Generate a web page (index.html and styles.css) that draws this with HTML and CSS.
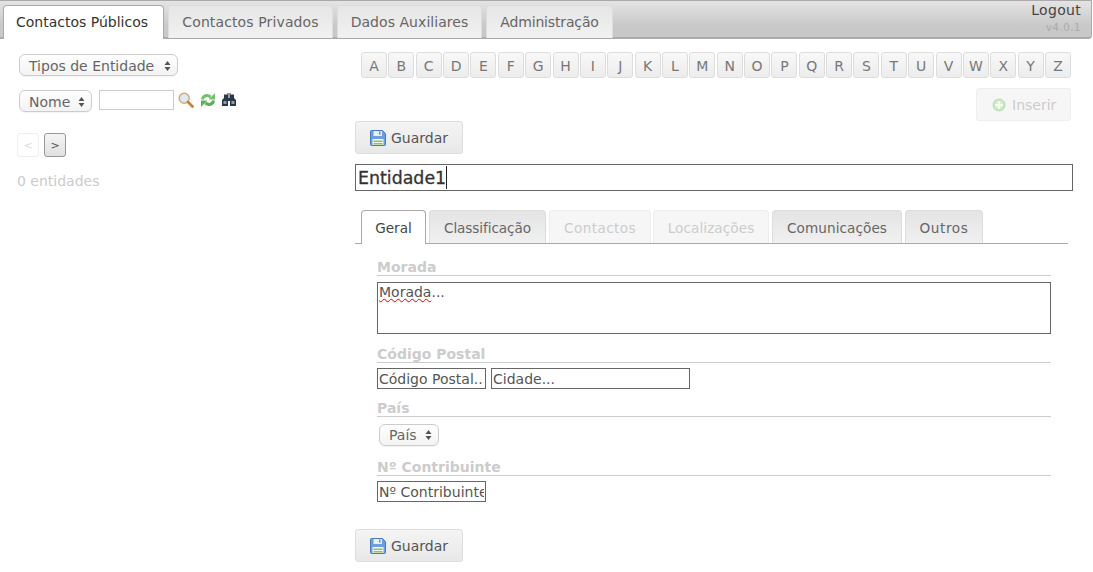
FILE: index.html
```html
<!DOCTYPE html>
<html lang="pt">
<head>
<meta charset="utf-8">
<title>Contactos Públicos</title>
<link rel="stylesheet" href="styles.css">
</head>
<body>
<header class="topbar">
  <nav class="maintabs">
    <a class="maintab active">Contactos Públicos</a>
    <a class="maintab tab-priv">Contactos Privados</a>
    <a class="maintab tab-dados">Dados Auxiliares</a>
    <a class="maintab tab-admin">Administração</a>
  </nav>
  <div class="session">
    <a class="logout">Logout</a>
    <span class="version">v4.0.1</span>
  </div>
</header>
<main class="page">
  <aside class="left">
    <div class="sel sel-tipos"><span>Tipos de Entidade</span><svg class="updown" width="7" height="10" viewBox="0 0 7 10"><path d="M3.500 0L6.500 4H0.500zM3.500 10L0.500 6h6z"/></svg></div>
    <div class="searchrow">
      <div class="sel sel-nome"><span>Nome</span><svg class="updown" width="7" height="10" viewBox="0 0 7 10"><path d="M3.500 0L6.500 4H0.500zM3.500 10L0.500 6h6z"/></svg></div>
      <input class="searchbox" type="text">
      <svg class="ico ico-search" width="16" height="16" viewBox="0 0 16 16"><circle cx="6.200" cy="6.200" r="5" fill="#dfe9f3" stroke="#d8a873" stroke-width="1.500"/><path d="M10 10l4.500 4.500" stroke="#c98336" stroke-width="2.800" stroke-linecap="round"/></svg>
      <svg class="ico ico-refresh" width="16" height="16" viewBox="0 0 16 16"><path d="M2.500 7.500C3 3.500 7.500 2.500 10.500 5" fill="none" stroke="#74bf6e" stroke-width="3"/><path d="M8.500 7.500H15V1z" fill="#74bf6e"/><path d="M13.500 8.500C13 12.500 8.500 13.500 5.500 11" fill="none" stroke="#5cae58" stroke-width="3"/><path d="M7.500 8.500H1V15z" fill="#5cae58"/></svg>
      <svg class="ico ico-bino" width="14" height="13" viewBox="0 0 14 13"><path d="M2 1.500h3.500V0h1v5h1V0h1v1.500H12V5l2 2v6H8V8H6v5H0V7l2-2z" fill="#2b3947"/><path d="M1.500 8h3v3h-3zM9.500 8h3v3h-3z" fill="#8a9fb5"/></svg>
    </div>
    <div class="pager">
      <button class="pg pg-off" type="button">&lt;</button>
      <button class="pg" type="button">&gt;</button>
    </div>
    <p class="count">0 entidades</p>
  </aside>
  <section class="right">
    <div class="alpha">
      <a class="let">A</a><a class="let">B</a><a class="let">C</a><a class="let">D</a><a class="let">E</a><a class="let">F</a><a class="let">G</a><a class="let">H</a><a class="let">I</a><a class="let">J</a><a class="let">K</a><a class="let">L</a><a class="let">M</a><a class="let">N</a><a class="let">O</a><a class="let">P</a><a class="let">Q</a><a class="let">R</a><a class="let">S</a><a class="let">T</a><a class="let">U</a><a class="let">V</a><a class="let">W</a><a class="let">X</a><a class="let">Y</a><a class="let">Z</a>
    </div>
    <div class="insertrow">
      <button class="btn btn-off" type="button">
        <svg width="14" height="14" viewBox="0 0 14 14"><circle cx="7" cy="7" r="6.500" fill="#bfe3b4"/><circle cx="7" cy="7" r="4.500" fill="#d8efcf"/><path d="M7 3.500v7M3.500 7h7" stroke="#fff" stroke-width="2.200"/></svg>
        <span>Inserir</span>
      </button>
    </div>
    <button class="btn btn-save" type="button">
      <svg width="16" height="16" viewBox="0 0 16 16"><path d="M0.500 1.500a1 1 0 0 1 1-1h11l3 3v11a1 1 0 0 1-1 1h-13a1 1 0 0 1-1-1z" fill="#6d9fe0" stroke="#4a78bd"/><rect x="3.500" y="1" width="8.500" height="5" fill="#e8eef6"/><rect x="9" y="1.500" width="1.500" height="3" fill="#5a8fd6"/><rect x="2.500" y="9" width="11" height="6" fill="#f3f6ea"/><rect x="3.500" y="10.500" width="9" height="1.500" fill="#8cc06a"/><rect x="3.500" y="13" width="9" height="1.500" fill="#8cc06a"/></svg>
      <span>Guardar</span>
    </button>
    <div class="title"><span class="title-text">Entidade1</span></div>
    <div class="subtabs">
      <a class="subtab active st-geral">Geral</a>
      <a class="subtab st-class">Classificação</a>
      <a class="subtab off st-cont">Contactos</a>
      <a class="subtab off st-loc">Localizações</a>
      <a class="subtab st-com">Comunicações</a>
      <a class="subtab st-out">Outros</a>
    </div>
    <form class="fields">
      <h3 class="flabel">Morada</h3>
      <div class="area"><span class="misspelt">Morada</span>...</div>
      <h3 class="flabel">Código Postal</h3>
      <div class="inrow">
        <input class="tin tin-short" type="text" placeholder="Código Postal...">
        <input class="tin tin-city" type="text" placeholder="Cidade...">
      </div>
      <h3 class="flabel lbl-pais">País</h3>
      <div class="sel sel-pais"><span>País</span><svg class="updown" width="7" height="10" viewBox="0 0 7 10"><path d="M3.500 0L6.500 4H0.500zM3.500 10L0.500 6h6z"/></svg></div>
      <h3 class="flabel lbl-nc">Nº Contribuinte</h3>
      <div class="inrow">
        <input class="tin tin-short" type="text" placeholder="Nº Contribuinte">
      </div>
    </form>
    <button class="btn btn-save btn-bottom" type="button">
      <svg width="16" height="16" viewBox="0 0 16 16"><path d="M0.500 1.500a1 1 0 0 1 1-1h11l3 3v11a1 1 0 0 1-1 1h-13a1 1 0 0 1-1-1z" fill="#6d9fe0" stroke="#4a78bd"/><rect x="3.500" y="1" width="8.500" height="5" fill="#e8eef6"/><rect x="9" y="1.500" width="1.500" height="3" fill="#5a8fd6"/><rect x="2.500" y="9" width="11" height="6" fill="#f3f6ea"/><rect x="3.500" y="10.500" width="9" height="1.500" fill="#8cc06a"/><rect x="3.500" y="13" width="9" height="1.500" fill="#8cc06a"/></svg>
      <span>Guardar</span>
    </button>
  </section>
</main>
</body>
</html>
```
FILE: styles.css
```css
* { box-sizing: border-box; }
html, body { margin: 0; padding: 0; }
body {
  width: 1093px;
  height: 572px;
  overflow: hidden;
  background: #fff;
  color: #555;
  font: 14px/20px "DejaVu Sans", sans-serif;
}
.topbar {
  display: flex;
  justify-content: space-between;
  width: 1092px;
  height: 39px;
  padding: 5px 10px 0 3px;
  background: linear-gradient(#e4e4e4, #c8c8c8 70%);
  border: 1px solid #aaa;
  border-width: 1px 1px 2px 0;
  border-radius: 0 0 4px 0;
}
.maintabs { display: flex; gap: 4px; }
.maintab {
  height: 33px;
  margin-top: -1px;
  padding-top: 6px;
  border: 1px solid #ddd;
  border-bottom: 0;
  border-radius: 4px 4px 0 0;
  background: linear-gradient(#e6e6e6, #f1f1f1);
  color: #666;
  text-align: center;
}
.maintab.active {
  width: 161px;
  height: 34px;
  margin-bottom: -2px;
  padding-left: 12px;
  background: #fff;
  border: 1px solid #aaa;
  border-bottom: 0;
  color: #333;
  text-align: left;
}
.tab-priv { width: 165px; letter-spacing: 0.12px; }
.tab-dados { width: 145px; letter-spacing: 0.05px; }
.tab-admin { width: 127px; letter-spacing: -0.15px; }
.session { display: flex; flex-direction: column; align-items: flex-end; margin-top: -5px; }
.logout { color: #444; line-height: 18px; letter-spacing: 0.3px; }
.version { color: #aaa; font-size: 10px; line-height: 14px; letter-spacing: 0.6px; margin-top: 2px; }

.page { display: flex; }
.left { width: 355px; padding: 15px 0 0 17px; }
.sel {
  display: flex;
  align-items: center;
  justify-content: space-between;
  height: 22px;
  margin-left: 2px;
  padding: 0 6px 0 9px;
  border: 1px solid #ccc;
  border-radius: 6px;
  background: linear-gradient(#fff, #f3f3f3);
  box-shadow: 0 1px 1px rgba(0,0,0,.05);
  color: #666;
  font-size: 14px;
}
.updown { fill: #555; flex: none; }
.sel-tipos { width: 159px; padding-top: 1px; }
.searchrow { display: flex; align-items: flex-start; margin-top: 14px; }
.sel-nome { width: 73px; padding-top: 1px; }
.searchbox { width: 75px; height: 20px; margin: 0 0 0 7px; padding: 0; border: 1px solid #ccc; background: #fff; }
.ico { display: block; flex: none; margin-top: 2px; }
.ico-search { margin-left: 4px; }
.ico-refresh { margin-left: 6px; }
.ico-bino { margin-left: 6px; margin-top: 3px; }
.pager { display: flex; gap: 5px; margin-top: 21px; }
.pg {
  width: 22px;
  height: 24px;
  padding: 0;
  border: 1px solid #999;
  border-radius: 3px;
  background: linear-gradient(#f5f5f5, #e0e0e0);
  color: #555;
  font: 11px "DejaVu Sans", sans-serif;
}
.pg-off { border-color: #eee; background: #fff; color: #ddd; }
.count { margin: 14px 0 0; color: #ccc; font-size: 14px; line-height: 20px; }

.right { width: 718px; padding-top: 13px; }
.alpha { display: flex; justify-content: space-between; width: 710px; margin-left: 6px; }
.let {
  width: 26px;
  height: 26px;
  border: 1px solid #ddd;
  border-radius: 3px;
  background: linear-gradient(#f8f8f8, #ececec);
  color: #777;
  text-align: center;
  line-height: 26px;
  font-size: 14px;
}
.insertrow { display: flex; justify-content: flex-end; width: 716px; margin-top: 10px; height: 33px; }
.btn {
  display: inline-flex;
  align-items: center;
  gap: 5px;
  height: 33px;
  padding: 0 0 0 14px;
  border: 1px solid #ddd;
  border-radius: 3px;
  background: linear-gradient(#f4f4f4, #e8e8e8);
  color: #555;
  font: 14px "DejaVu Sans", sans-serif;
}
.btn-off { width: 95px; padding-left: 15px; gap: 6px; background: #f6f6f6; border-color: #eee; color: #ccc; }
.btn-save { display: flex; width: 108px; }
.title {
  width: 718px;
  height: 27px;
  margin-top: 10px;
  padding-left: 2px;
  border: 1px solid #666;
  color: #333;
  font-size: 17.4px;
  -webkit-text-stroke: 0.3px #333;
}
.title-text { display: block; width: max-content; height: 23px; line-height: 25px; margin-top: 1px; border-right: 1px solid #222; }
.subtabs {
  display: flex;
  gap: 3px;
  width: 713px;
  height: 34px;
  margin-top: 19px;
  padding-left: 6px;
  border-bottom: 1px solid #aaa;
  font-size: 13.6px;
}
.subtab {
  height: 33px;
  padding-top: 7px;
  border: 1px solid #ddd;
  border-bottom: 0;
  border-radius: 4px 4px 0 0;
  background: linear-gradient(#e4e4e4, #f0f0f0);
  color: #666;
  text-align: center;
}
.subtab.active {
  height: 34px;
  background: #fff;
  border: 1px solid #aaa;
  border-bottom: 0;
  color: #444;
}
.subtab.off { background: #f6f6f6; border-color: #eee; color: #ccc; }
.st-geral { width: 65px; }
.st-class { width: 117px; letter-spacing: -0.08px; }
.st-cont { width: 102px; letter-spacing: 0.4px; }
.st-loc { width: 116px; margin-left: -1px; letter-spacing: 0.08px; }
.st-com { width: 130px; letter-spacing: 0.08px; }
.st-out { width: 78px; letter-spacing: 0.6px; }
.fields { width: 674px; margin-left: 22px; padding-top: 15px; }
.flabel {
  margin: 12px 0 0;
  height: 17px;
  border-bottom: 1px solid #ccc;
  color: #ccc;
  font-size: 14px;
  font-weight: bold;
  line-height: 16px;
}
.flabel:first-child { margin-top: 0; }
.area {
  width: 674px;
  height: 52px;
  margin-top: 6px;
  padding: 0 1px;
  border: 1px solid #666;
  color: #555;
  line-height: 18px;
}
.misspelt { text-decoration: underline wavy #e00; text-decoration-thickness: 1px; text-underline-offset: 1px; }
.inrow { display: flex; gap: 5px; margin-top: 5px; }
.tin {
  height: 21px;
  margin: 0;
  padding: 0 1px;
  border: 1px solid #666;
  background: #fff;
  color: #555;
  font: 14px "DejaVu Sans", sans-serif;
}
.tin::placeholder { color: #555; opacity: 1; }
.tin-short { width: 109px; }
.tin-city { width: 199px; }
.lbl-pais { margin-top: 11px; }
.sel-pais { width: 60px; margin: 7px 0 0 2px; }
.lbl-nc { margin-top: 13px; }
.btn-bottom { margin-top: 27px; }
```
